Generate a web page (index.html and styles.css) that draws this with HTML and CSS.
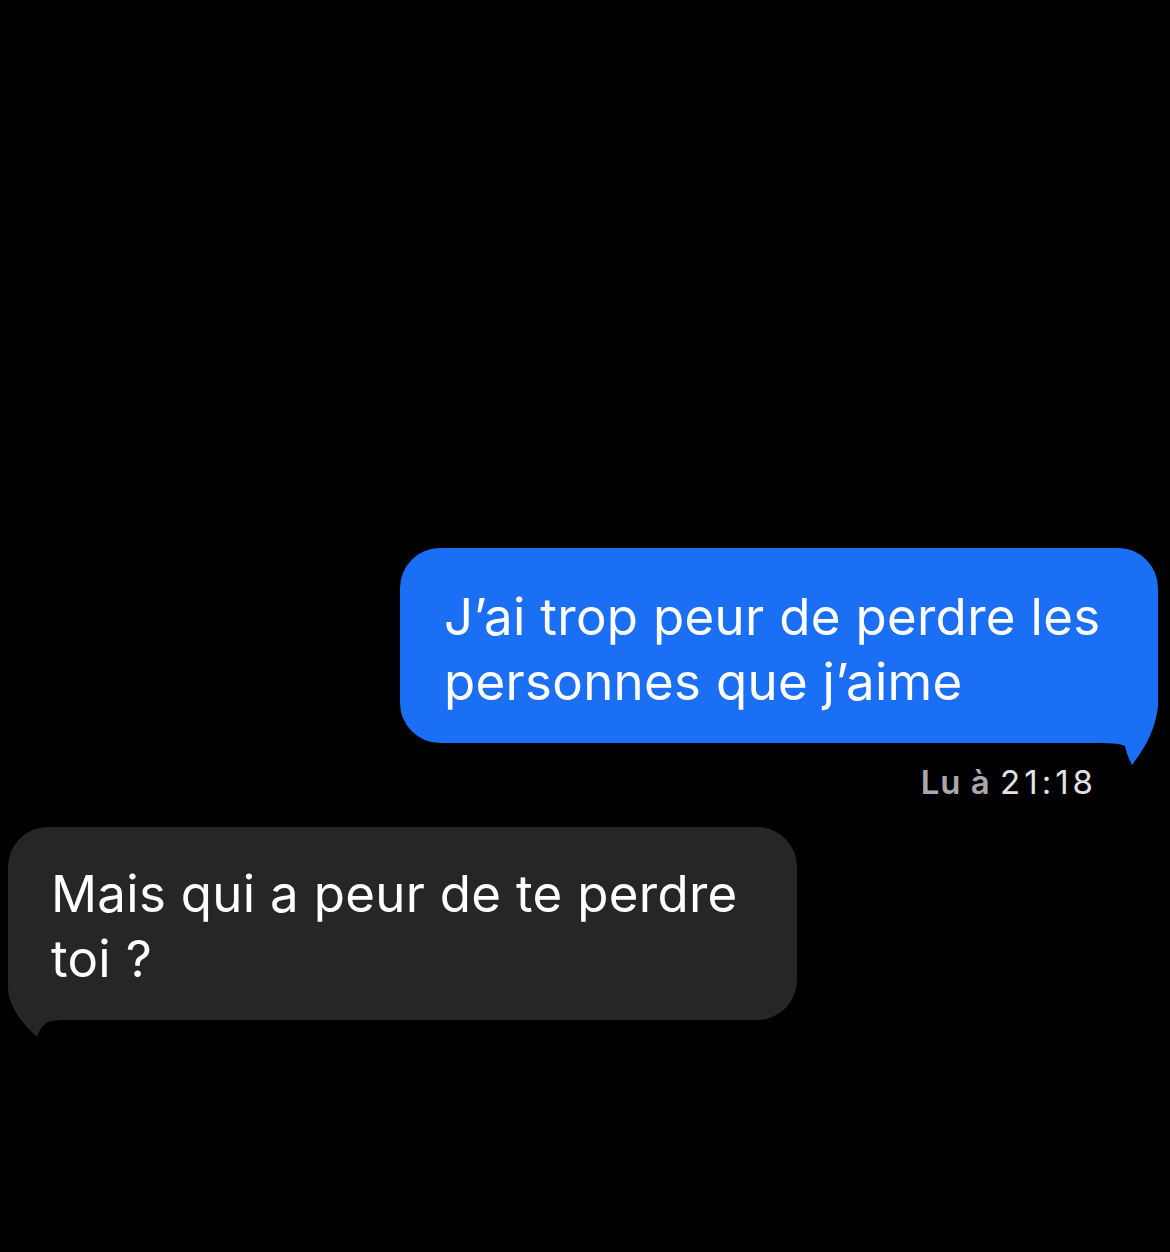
FILE: index.html
```html
<!DOCTYPE html>
<html lang="fr">
<head>
<meta charset="utf-8">
<link rel="stylesheet" href="styles.css">
</head>
<body>
<main class="thread">
  <div class="msg msg-out">
    <svg class="tail tail-out" width="70" height="80" viewBox="0 0 70 80">
      <path d="M0 0 H70 V15 C70 40 58 62 44 80 C40 72 38 66 37 61 C31 58 20 58 0 58 Z" fill="#1b6ff5"/>
    </svg>
    <p class="bubble-text">J’ai trop peur de perdre les personnes que j’aime</p>
  </div>
  <div class="status"><span class="status-label">Lu à</span> <span class="status-time">21:18</span></div>
  <div class="msg msg-in">
    <svg class="tail tail-in" width="70" height="75" viewBox="0 0 70 75">
      <path d="M0 0 V25 C0 45 15 62 29 75 C31 68 35 63 40 60 C48 58 55 58 70 58 V0 Z" fill="#262628"/>
    </svg>
    <p class="bubble-text">Mais qui a peur de te perdre toi ?</p>
  </div>
</main>
</body>
</html>
```
FILE: styles.css
```css
html, body {
  margin: 0;
  padding: 0;
  background: #000;
}
body {
  width: 1170px;
  height: 1252px;
  overflow: hidden;
  font-family: Inter, "Liberation Sans", Arial, sans-serif;
}
.thread {
  display: flex;
  flex-direction: column;
  padding-top: 548px;
}
.msg {
  position: relative;
  box-sizing: border-box;
  border-radius: 40px;
}
.msg-out {
  margin-left: 400px;
  width: 758px;
  height: 195px;
  background: #1b6ff5;
  padding: 36px 10px 0 44px;
}
.msg-in {
  margin-left: 8px;
  width: 789px;
  height: 193px;
  background: #262628;
  padding: 34px 10px 0 43px;
  margin-top: 25px;
}
.bubble-text {
  position: relative;
  margin: 0;
  color: #fff;
  font-size: 51px;
  line-height: 65px;
  letter-spacing: 0.3px;
}
.tail {
  position: absolute;
  display: block;
}
.tail-out {
  right: 0;
  bottom: -22px;
}
.tail-in {
  left: 0;
  bottom: -17px;
}
.status {
  align-self: flex-end;
  margin-right: 73px;
  margin-top: 19px;
  font-size: 33px;
  line-height: 40px;
}
.status-label {
  color: #a9a9ad;
  font-weight: 600;
  letter-spacing: 1px;
}
.status-time {
  color: #e2e2e6;
  letter-spacing: 4px;
}
```
